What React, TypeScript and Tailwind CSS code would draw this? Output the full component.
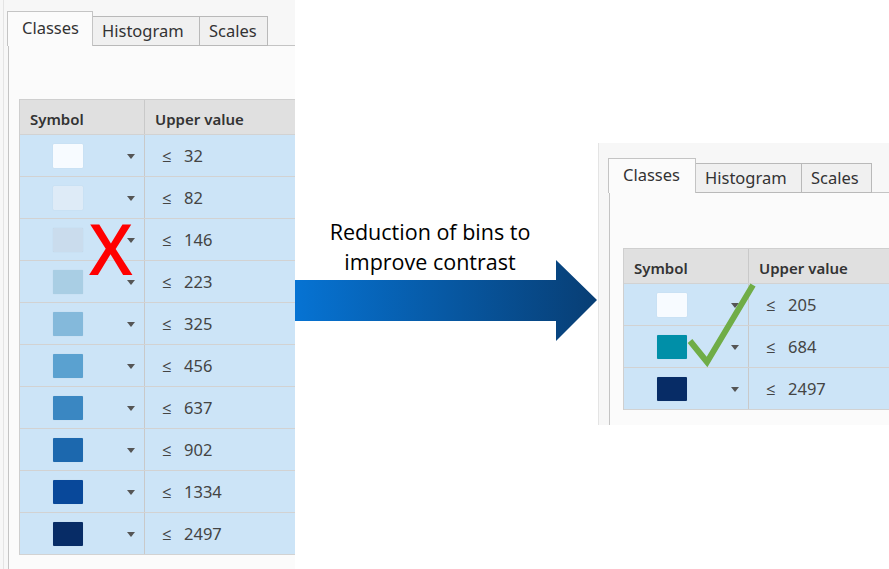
import React from "react";

const FONT = { fontFamily: '"Noto Sans", "Open Sans", sans-serif' };

function Caret() {
  return (
    <svg width="8" height="5" viewBox="0 0 8 5" className="block">
      <path d="M0 0 L8 0 L4 5 Z" fill="#555" />
    </svg>
  );
}

function Tabs({ widths }: { widths: number[] }) {
  const names = ["Classes", "Histogram", "Scales"];
  return (
    <div className="flex items-end -ml-px">
      {names.map((n, i) =>
        i === 0 ? (
          <div
            key={n}
            style={{ width: widths[i] }}
            className="h-[35px] border border-b-0 border-[#c4c4c4] bg-[#fbfbfb] text-[16.5px] text-[#333] pl-[14px] pt-[6px] leading-[20px] relative z-10"
          >
            {n}
          </div>
        ) : (
          <div
            key={n}
            style={{ width: widths[i] }}
            className="h-[30px] border border-l-0 border-[#b9b9b9] bg-[#f0f0f0] text-[16.5px] text-[#333] pl-[9px] pt-[4px] leading-[20px]"
          >
            {n}
          </div>
        )
      )}
      <div className="flex-1 border-b border-[#c4c4c4]" />
    </div>
  );
}

function Table({ rows }: { rows: { c: string; v: string }[] }) {
  return (
    <div className="border-l border-[#cfcfcf]">
      <div className="flex h-[35px] bg-[#e0e0e0] border-t border-[#cfcfcf] text-[15px] font-semibold text-[#333]">
        <div className="w-[125px] border-r border-[#c9c9c9] pl-[10px] pt-[8px]">Symbol</div>
        <div className="flex-1 pl-[10px] pt-[8px]">Upper value</div>
      </div>
      {rows.map((r, i) => (
        <div key={i} className="flex h-[42px] bg-[#cce4f7] border-t border-[#d2d2d2] text-[16.5px] text-[#444]">
          <div className="w-[125px] border-r border-[#c9c9c9] flex items-center">
            <div className="ml-[33px] w-[30px] h-[24px] rounded-[1px]" style={{ backgroundColor: r.c, boxShadow: "0 0 1px rgba(0,0,0,0.15)" }} />
            <div className="ml-[44px] mt-[2px]"><Caret /></div>
          </div>
          <div className="flex-1 flex items-center pl-[17px] pt-[2px]">
            <span className="w-[22px]">≤</span>
            <span>{r.v}</span>
          </div>
        </div>
      ))}
      <div className="border-t border-[#d2d2d2]" />
    </div>
  );
}

const leftRows = [
  { c: "#f7fbff", v: "32" },
  { c: "#deebf7", v: "82" },
  { c: "#cadced", v: "146" },
  { c: "#a9cee4", v: "223" },
  { c: "#84b9db", v: "325" },
  { c: "#5aa1d0", v: "456" },
  { c: "#3a87c2", v: "637" },
  { c: "#1c68ae", v: "902" },
  { c: "#08489a", v: "1334" },
  { c: "#072c66", v: "2497" },
];

const rightRows = [
  { c: "#f7fbff", v: "205" },
  { c: "#008fa8", v: "684" },
  { c: "#072c66", v: "2497" },
];

export default function App() {
  return (
    <div className="w-[889px] h-[569px] bg-white flex overflow-hidden" style={FONT}>
      {/* Left panel */}
      <div className="w-[295px] h-[569px] flex bg-[#f7f7f7] relative shrink-0">
        <div className="w-[3px]" />
        <div className="w-px bg-[#e4e4e4]" />
        <div className="w-[4px]" />
        <div className="flex-1 flex flex-col pt-[11px]">
          <Tabs widths={[86, 107, 68]} />
          <div className="flex-1 border-l border-[#c4c4c4] bg-[#fbfbfb] pl-[10px] pt-[53px]">
            <Table rows={leftRows} />
          </div>
        </div>
        <div
          className="absolute left-[89px] top-[208px] text-[70px] leading-[80px] font-semibold text-[#ff0000]"
          style={{ fontFamily: '"Open Sans", sans-serif' }}
        >
          X
        </div>
      </div>

      {/* Middle */}
      <div className="w-[303px] shrink-0 flex flex-col pt-[217px]">
        <div
          className="w-[270px] text-center leading-[30px] text-black"
          style={{ fontFamily: '"Open Sans", sans-serif', fontSize: 21.5 }}
        >
          Reduction of bins to
          <br />
          improve contrast
        </div>
        <svg width="303" height="82" viewBox="0 0 303 82" className="-mt-[17px] block">
          <defs>
            <linearGradient id="g" x1="0" y1="0" x2="1" y2="0">
              <stop offset="0" stopColor="#0673d3" />
              <stop offset="1" stopColor="#083e74" />
            </linearGradient>
          </defs>
          <path d="M0 20 L261 20 L261 0 L302 40 L261 81 L261 61 L0 61 Z" fill="url(#g)" />
        </svg>
      </div>

      {/* Right panel */}
      <div className="flex-1 pt-[143px]">
        <div className="h-[282px] flex bg-[#f7f7f7] relative">
          <div className="w-px bg-[#e4e4e4]" />
          <div className="w-[10px]" />
          <div className="flex-1 flex flex-col pt-[15px]">
            <Tabs widths={[88, 106, 70]} />
            <div className="flex-1 border-l border-[#c4c4c4] bg-[#fbfbfb] pl-[13px] pt-[55px]">
              <Table rows={rightRows} />
            </div>
          </div>
          <svg className="absolute left-[88px] top-[139px]" width="72" height="86" viewBox="0 0 72 86">
            <polyline points="4,59 21,80 67,3" fill="none" stroke="#70ad47" strokeWidth="6" strokeLinejoin="miter" />
          </svg>
        </div>
      </div>
    </div>
  );
}
